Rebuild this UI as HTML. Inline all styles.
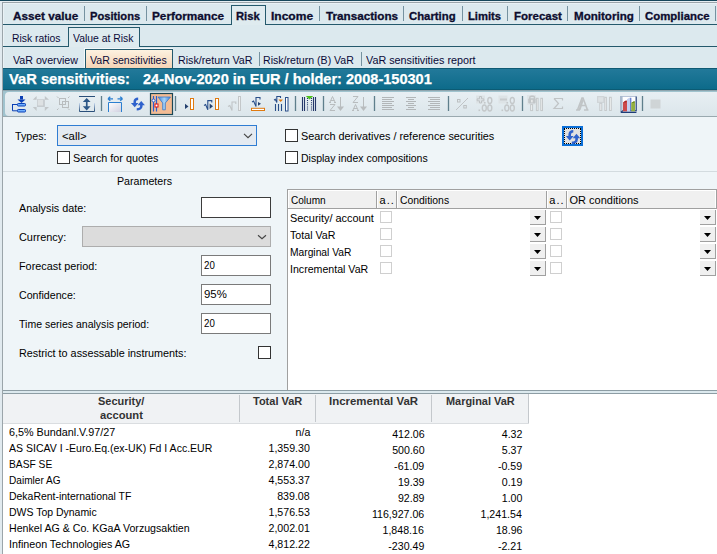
<!DOCTYPE html>
<html><head><meta charset="utf-8"><style>
html,body{margin:0;padding:0;width:717px;height:554px;overflow:hidden;position:relative;background:#dce9ee;font-family:'Liberation Sans', sans-serif;}
.a{position:absolute;}
</style></head><body>
<!-- frame -->
<div class="a" style="left:0;top:0;width:717px;height:1px;background:#17475b"></div>
<div class="a" style="left:0;top:1px;width:717px;height:1px;background:#e6eef2"></div>
<div class="a" style="left:0;top:2px;width:2px;height:552px;background:#e1eaef"></div>
<div class="a" style="left:2px;top:2px;width:715px;height:1px;background:#9ba5aa"></div>
<div class="a" style="left:2px;top:2px;width:1px;height:552px;background:#9ba5aa"></div>
<div class="a" style="left:3px;top:3px;width:714px;height:1px;background:#e9f1f5"></div>
<div class="a" style="left:3px;top:3px;width:1px;height:87px;background:#e9f1f5"></div>
<!-- main tab separators -->
<div class="a" style="left:84px;top:6px;width:1px;height:15px;background:#7592a0"></div>
<div class="a" style="left:146px;top:6px;width:1px;height:15px;background:#7592a0"></div>
<div class="a" style="left:319px;top:6px;width:1px;height:15px;background:#7592a0"></div>
<div class="a" style="left:403px;top:6px;width:1px;height:15px;background:#7592a0"></div>
<div class="a" style="left:462px;top:6px;width:1px;height:15px;background:#7592a0"></div>
<div class="a" style="left:507px;top:6px;width:1px;height:15px;background:#7592a0"></div>
<div class="a" style="left:567px;top:6px;width:1px;height:15px;background:#7592a0"></div>
<div class="a" style="left:639px;top:6px;width:1px;height:15px;background:#7592a0"></div>
<div class="a" style="left:715px;top:6px;width:1px;height:15px;background:#7592a0"></div>
<!-- risk tab -->
<div class="a" style="left:231px;top:5px;width:33px;height:19px;border:1px solid #24596c;border-bottom:none;background:#dfebef"></div>
<div class="a" style="left:3px;top:24px;width:228px;height:1px;background:#24596c"></div>
<div class="a" style="left:266px;top:24px;width:451px;height:1px;background:#24596c"></div>
<!-- second row -->
<div class="a" style="left:68px;top:27px;width:70px;height:19px;border:1px solid #24596c;border-bottom:none;background:#dfebef"></div>
<div class="a" style="left:3px;top:46px;width:65px;height:1px;background:#24596c"></div>
<div class="a" style="left:140px;top:46px;width:577px;height:1px;background:#24596c"></div>
<!-- third row -->
<div class="a" style="left:84px;top:48px;width:89px;height:20px;background:#f4f8fa"></div>
<div class="a" style="left:85px;top:49px;width:86px;height:19px;border:1px solid #24596c;border-bottom:none;background:linear-gradient(#fdf2e0,#f4d2b4)"></div>
<div class="a" style="left:259px;top:52px;width:1px;height:14px;background:#7592a0"></div>
<div class="a" style="left:361px;top:52px;width:1px;height:14px;background:#7592a0"></div>
<!-- title bar -->
<div class="a" style="left:3px;top:68px;width:714px;height:22px;background:linear-gradient(#0f5a73 0,#0f5a73 1px,#22799a 1px,#0d6b8a 21px,#0b5b74 21px)"></div>
<div class="a" style="left:3px;top:90px;width:714px;height:1px;background:#8fa5ae"></div>
<!-- toolbar -->
<div class="a" style="left:3px;top:91px;width:714px;height:25px;background:#a0c3ce"></div>
<div class="a" style="left:5px;top:92px;width:712px;height:24px;border-radius:4px 0 0 4px;background:linear-gradient(#e8eff3,#dce6eb)"></div>
<div class="a" style="left:3px;top:116px;width:714px;height:1px;background:#9aa9af"></div>
<svg class="a" style="left:0;top:0" width="717" height="120" viewBox="0 0 717 120">
<defs>
<linearGradient id="g5" x1="0" y1="0" x2="1" y2="1"><stop offset="0" stop-color="#fff"/><stop offset="1" stop-color="#cfd0e0"/></linearGradient>
<linearGradient id="g4" x1="0" y1="0" x2="0" y2="1"><stop offset="0" stop-color="#c9daf0"/><stop offset="1" stop-color="#2a4f7a"/></linearGradient>
<linearGradient id="gf" x1="0" y1="0" x2="1" y2="0"><stop offset="0" stop-color="#3c82d8"/><stop offset="0.5" stop-color="#a8d4f8"/><stop offset="1" stop-color="#3c82d8"/></linearGradient>
</defs>
<g stroke="#5f7f8c" stroke-width="1.3">
<path d="M101.5 96V111M175.5 96V111M295.5 96V111M323.5 96V111M374.5 96V111M448.5 96V111M522.5 96V111M642.5 96V111"/>
</g>
<!-- 1 tree -->
<g>
<rect x="20" y="96" width="3" height="3.5" fill="#0a3fb5"/>
<path d="M17.5 99.5H25.5L21.5 103Z" fill="#0a3fb5"/>
<path d="M12.5 104V110.8H17M12.5 104.5H17" stroke="#0a3fb5" fill="none"/>
<rect x="17.5" y="103.5" width="8" height="2.5" rx="0.8" fill="#6fb0ff" stroke="#0a3fb5"/>
<rect x="17.5" y="109.5" width="8" height="2.5" rx="0.8" fill="#6fb0ff" stroke="#0a3fb5"/>
</g>
<!-- 2 gray arrows -->
<g fill="#c1c6c9">
<path d="M32.8 99.8L36.6 95.9V99.8Z"/><path d="M49 99.8L44.8 95.9V99.8Z"/>
<path d="M32.8 107L36.6 110.9V107Z"/><path d="M49 107L44.8 110.9V107Z"/>
<rect x="37" y="99.3" width="7.8" height="7.6" fill="#c4c9cc"/>
<rect x="37.6" y="99.9" width="5.6" height="5.6" fill="#dde1e3"/>
</g>
<!-- 3 gray squares -->
<g stroke="#b9bdbf" fill="none">
<rect x="59.5" y="98.5" width="6" height="6"/><rect x="62.5" y="101.5" width="6" height="6"/>
<path d="M57 96.5L58.5 98M69.5 96.5L68 98M57 110L58.5 108.5M69.5 110L68 108.5" stroke-width="1"/>
</g>
<!-- 4 expand vertical -->
<g>
<path d="M79 96.5H95" stroke="#2a4f7a"/>
<path d="M79.5 103V111.5H94.5V103" stroke="url(#g4)" fill="none"/>
<path d="M86.7 98L82.8 102H90.6Z M86.7 110.5L82.8 106.3H90.6Z" fill="#2c5888"/>
<rect x="85.9" y="101.5" width="1.7" height="5.5" fill="#2c5888"/>
</g>
<!-- 5 -->
<g>
<path d="M108 98.8H113M108 98.8L110.3 96.8M108 98.8L110.3 100.8 M117.5 98.8H122.5M122.5 98.8L120.2 96.8M122.5 98.8L120.2 100.8" stroke="#2a7fd0" stroke-width="1.3" fill="none"/>
<rect x="108.5" y="102.5" width="13" height="9.5" fill="url(#g5)"/>
<path d="M108.5 112V102.5H121.5V112" stroke="#2a7fd0" fill="none"/>
</g>
<!-- 6 refresh arrows -->
<g transform="translate(130.2 96.8) scale(0.96 0.9)">
<path d="M8.3 2.2C5.8 2.2 4.7 3.6 4.7 5.6V7.5" stroke="#2f62cc" stroke-width="2.6" fill="none"/>
<path d="M0.8 7H8.6L4.7 11.6Z" fill="#2f62cc"/>
<path d="M6.8 13.9C9.4 13.9 11.6 12.7 11.6 10.5V8.6" stroke="#2f62cc" stroke-width="2.6" fill="none"/>
<path d="M7.7 9.3H15.3L11.5 4.8Z" fill="#2f62cc"/>
</g>
<!-- 7 filter selected -->
<g>
<rect x="150.5" y="93.5" width="22" height="21" fill="#f3bc94" stroke="#1b4756" stroke-width="1.2"/>
<path d="M153.5 96V111.5M156.5 96V111.5" stroke="#2a5fd0" stroke-width="1.2"/>
<circle cx="153.5" cy="100.5" r="1.5" fill="#fff" stroke="#2a5fd0"/>
<rect x="155" y="104" width="3" height="3" fill="#fff" stroke="#e01010"/>
<path d="M158 97H170.5L165.3 103V109.8H162.7V103Z" fill="url(#gf)" stroke="#3a78c8" stroke-width="0.8"/>
</g>
<!-- 8 -->
<path d="M185 103.8V109L188.5 106.4Z" fill="#24406e"/>
<rect x="190.5" y="98.5" width="3" height="11" fill="#fff" stroke="#e07a10"/>
<!-- 9 -->
<path d="M204 105.5L205.6 104.6L207.8 109.8V100.6H211.8V102.5" stroke="#2a4f8a" stroke-width="1.1" fill="none"/>
<path d="M209.6 103.5V109L213 106.3Z" fill="#24406e"/>
<rect x="215.5" y="98.5" width="3" height="11" fill="#fff" stroke="#e07a10"/>
<!-- 10 gray -->
<path d="M228 106.5L229.8 105.5L232 110.4V102H235.8V104" stroke="#c0c4c6" stroke-width="1.1" fill="none"/>
<rect x="238.5" y="96.5" width="2" height="14" fill="#eef0f1" stroke="#c3c7c9"/>
<!-- 11 -->
<path d="M252 102L253.6 101.1L256 106.5V97.5H260V99.5" stroke="#2a4f8a" stroke-width="1.1" fill="none"/>
<path d="M258 101.9V105.8L261 103.8Z" fill="#24406e"/>
<rect x="251.5" y="108.3" width="13" height="2.2" fill="#fff" stroke="#e07a10"/>
<!-- 12 -->
<path d="M274 100L275.3 99.3L276.8 102.5V96.5H280.5V98" stroke="#2a4f8a" stroke-width="1.1" fill="none"/>
<path d="M278.4 99.4H283L280.7 102Z" fill="#e07a10"/>
<path d="M275.5 104V111M278.5 104V111M281.5 104V111" stroke="#2a4f8a" stroke-width="1.1"/>
<rect x="285.5" y="97.5" width="2.5" height="13.5" fill="#fff" stroke="#2a4f8a"/>
<!-- 13 columns -->
<path d="M302.5 97V111M304.5 97V111M313.5 97V111M315.5 97V111" stroke="#26386a" stroke-width="1.1"/>
<path d="M307.5 98V111M311.5 98V111" stroke="#26386a" stroke-width="1.1" stroke-dasharray="1 1.1"/>
<path d="M305.8 96H313.2L309.5 99.6Z" fill="#4cc01a"/>
<!-- 14 AZ -->
<g stroke="#b8bcbe" fill="none" stroke-width="1">
<path d="M329.8 102.5L332.5 96.5L335.2 102.5M330.8 100.5H334.2M329 102.5H331M334 102.5H336"/>
<path d="M330 104.5H335L330 110.5H335"/>
<path d="M340.5 97V108"/>
</g>
<path d="M337 106.5H344L340.5 111Z" fill="#b8bcbe"/>
<!-- 15 ZA -->
<g stroke="#b8bcbe" fill="none" stroke-width="1">
<path d="M353 96.5H358L353 102.5H358"/>
<path d="M352.8 110.5L355.5 104.5L358.2 110.5M353.8 108.5H357.2M352 110.5H354M357 110.5H359"/>
<path d="M363.5 97V108"/>
</g>
<path d="M360 106.5H367L363.5 111Z" fill="#b8bcbe"/>
<!-- 16-18 align -->
<g stroke="#b2b6b8" stroke-width="1">
<path d="M382 97.5H394M382 99.5H392M382 101.5H394M382 103.5H392M382 105.5H394M382 107.5H392M382 109.5H394"/>
<path d="M406 97.5H416M408 99.5H414M406 101.5H416M408 103.5H414M406 105.5H416M408 107.5H414M406 109.5H416"/>
<path d="M428 97.5H440M430 99.5H440M428 101.5H440M430 103.5H440M428 105.5H440M430 107.5H440M428 109.5H440"/>
</g>
<!-- 19 % -->
<g stroke="#bcc0c2" fill="none">
<rect x="457.5" y="99.5" width="2.5" height="2.5"/><rect x="463.8" y="105.5" width="2.5" height="2.5"/>
<path d="M456 110L468 98" stroke-width="0.9"/>
</g>
<!-- 20 +.0 .00 -->
<g fill="#c4c8ca">
<rect x="476" y="95.5" width="9" height="8" fill="#dde3e6"/>
<path d="M479.5 96.5H481.5V98.8H483.8V100.8H481.5V103H479.5V100.8H477.2V98.8H479.5Z" fill="none" stroke="#bfc3c5"/>
<rect x="484" y="102" width="1.6" height="1.6"/>
<rect x="478.5" y="109.5" width="1.6" height="1.6"/>
<ellipse cx="489.8" cy="100.5" rx="2" ry="3" fill="none" stroke="#c4c8ca" stroke-width="1.4"/>
<ellipse cx="484.3" cy="108" rx="2" ry="3" fill="none" stroke="#c4c8ca" stroke-width="1.4"/>
<ellipse cx="489.8" cy="108" rx="2" ry="3" fill="none" stroke="#c4c8ca" stroke-width="1.4"/>
</g>
<!-- 21 -.0 .00 -->
<g fill="#c4c8ca">
<rect x="498.5" y="95.5" width="9" height="8" fill="#dde3e6"/>
<rect x="500" y="98.5" width="7" height="2" fill="#c8ccce"/>
<rect x="506.5" y="102" width="1.6" height="1.6"/>
<rect x="501.5" y="109.5" width="1.6" height="1.6"/>
<ellipse cx="512.3" cy="100.5" rx="2" ry="3" fill="none" stroke="#c4c8ca" stroke-width="1.4"/>
<ellipse cx="506.8" cy="108" rx="2" ry="3" fill="none" stroke="#c4c8ca" stroke-width="1.4"/>
<ellipse cx="512.3" cy="108" rx="2" ry="3" fill="none" stroke="#c4c8ca" stroke-width="1.4"/>
</g>
<!-- 22 lock bars -->
<g>
<rect x="527" y="95" width="9" height="10" fill="#dfe5e8"/>
<path d="M529.8 99V97.6Q529.8 96.3 531.2 96.3H533.1Q534.5 96.3 534.5 97.6V99" stroke="#c2c6c8" stroke-width="1.4" fill="none"/>
<path d="M529 98.3H534.8L535.6 99.2V102.8L534.8 103.6H529L528.2 102.8V99.2Z" fill="#c2c6c8"/>
<rect x="531.2" y="99.8" width="1.4" height="2.6" fill="#eef0f1"/>
<rect x="530.6" y="104.6" width="2" height="6" fill="#eef0f1" stroke="#c4c8ca"/>
<rect x="536.4" y="98.3" width="1.7" height="12.3" fill="#eef0f1" stroke="#c4c8ca"/>
<rect x="540.8" y="98.3" width="1.7" height="12.3" fill="#eef0f1" stroke="#c4c8ca"/>
</g>
<!-- 23 sigma -->
<path d="M554 98.5H562.5V100.5M554 98.5L558.5 103.5L554 108.5H562.5V106.5" stroke="#c0c4c6" stroke-width="1.2" fill="none"/>
<!-- 24 A -->
<path d="M576 110H580M584 110H588.5M577.5 110L582 98H583L587.5 110M579.2 105.5H585.8" stroke="#c0c4c6" stroke-width="1.6" fill="none"/>
<path d="M582 98L578.5 110H580.5L583.5 101Z" fill="#c0c4c6"/>
<!-- 25 gray bars -->
<g>
<rect x="597" y="96" width="7.4" height="7" fill="#d0d5d8"/>
<rect x="598.2" y="97.2" width="5" height="4.6" fill="#dde2e4"/>
<rect x="599.8" y="103.3" width="2" height="7.2" fill="#eef0f1" stroke="#c6cacc"/>
<rect x="604.8" y="97.3" width="1.6" height="13.2" fill="#eef0f1" stroke="#c6cacc"/>
<rect x="609.5" y="97.3" width="1.8" height="13.2" fill="#eef0f1" stroke="#c6cacc"/>
</g>
<!-- 26 chart selected -->
<g>
<rect x="620" y="96" width="17" height="17" fill="#fefeff"/>
<path d="M620.5 96.5H636.5" stroke="#b8c4d8"/>
<rect x="620" y="96" width="2.6" height="17" fill="#a9b9cd"/>
<path d="M621 112.3L622.8 110.8H636.2V96.5" stroke="#1f3d78" stroke-width="1.2" fill="none"/>
<path d="M621 112.5H636.5" stroke="#1f3d78" stroke-width="1"/>
<path d="M623 102.5L625.5 100.8H627V111.2H623Z" fill="#cc4a4a"/>
<path d="M623 102.5L625.5 100.8H627L626 102.5Z" fill="#a82a2a"/>
<path d="M627 99.3L629.3 97.8H630.8V111.2H627Z" fill="#c4d0f0"/>
<path d="M630.8 97.8V111.2" stroke="#3050c0" stroke-width="0.9"/>
<path d="M631.2 103L633.5 101.5H635V111.2H631.2Z" fill="#94b040"/>
<path d="M631.2 103L633.5 101.5H635L634 103Z" fill="#6a8a20"/>
</g>
<!-- 27 -->
<rect x="650.5" y="99.5" width="10" height="9" fill="#cfd4d6"/>
</svg>

<!-- search area -->
<div class="a" style="left:3px;top:117px;width:714px;height:437px;background:#eff5f8"></div>
<div class="a" style="left:3px;top:171px;width:714px;height:1px;background:#d3dbdf"></div>
<div class="a" style="left:57px;top:125px;width:198px;height:19px;border:1px solid #2f7dd3;background:#e4eaf1"></div>
<svg class="a" style="left:243px;top:132px" width="11" height="8"><path d="M1 1.8 L5 5.6 L9 1.8" stroke="#444" stroke-width="1.15" fill="none"/></svg>
<div class="a" style="left:57px;top:151px;width:11px;height:11px;border:1px solid #333;background:#fff"></div>
<div class="a" style="left:285px;top:129px;width:11px;height:11px;border:1px solid #333;background:#fff"></div>
<div class="a" style="left:285px;top:151px;width:11px;height:11px;border:1px solid #333;background:#fff"></div>
<!-- refresh button -->
<div class="a" style="left:562px;top:126px;width:17px;height:16px;border:2px solid #0b6fd8;background:#fff"></div>
<div class="a" style="left:564px;top:128px;width:15px;height:14px;border:1px dotted #000;background:#e1e1e1"></div>
<svg class="a" style="left:565px;top:129px" width="15" height="15" viewBox="0 0 15 15">
<path d="M8.3 2.2C5.8 2.2 4.7 3.6 4.7 5.6V7.5" stroke="#2f62cc" stroke-width="2.6" fill="none"/>
<path d="M0.8 7H8.6L4.7 11.6Z" fill="#2f62cc"/>
<path d="M6.8 13.9C9.4 13.9 11.6 12.7 11.6 10.5V8.6" stroke="#2f62cc" stroke-width="2.6" fill="none"/>
<path d="M7.7 9.3H15.3L11.5 4.8Z" fill="#2f62cc"/>
</svg>
<!-- parameters -->
<div class="a" style="left:201px;top:197px;width:68px;height:19px;border:1px solid #3c3c3c;background:#fff"></div>
<div class="a" style="left:82px;top:226px;width:187px;height:19px;border:1px solid #adadad;background:#dcdcdc"></div>
<svg class="a" style="left:257px;top:233px" width="11" height="8"><path d="M1 2.3 L5 5.7 L9 2.3" stroke="#444" stroke-width="1.15" fill="none"/></svg>
<div class="a" style="left:201px;top:255px;width:68px;height:19px;border:1px solid #7a7a7a;background:#fff"></div>
<div class="a" style="left:201px;top:284px;width:68px;height:19px;border:1px solid #7a7a7a;background:#fff"></div>
<div class="a" style="left:201px;top:313px;width:68px;height:19px;border:1px solid #7a7a7a;background:#fff"></div>
<div class="a" style="left:258px;top:346px;width:11px;height:11px;border:1px solid #333;background:#fff"></div>
<!-- column table -->
<div class="a" style="left:287px;top:189px;width:430px;height:201px;background:#fff"></div>
<div class="a" style="left:287px;top:189px;width:1px;height:201px;background:#a0a0a0"></div>
<div class="a" style="left:287px;top:189px;width:430px;height:1px;background:#a0a0a0"></div>
<div class="a" style="left:716px;top:189px;width:1px;height:20px;background:#a0a0a0"></div>
<div class="a" style="left:289px;top:191px;width:426px;height:17px;background:#f0f0f0"></div>
<div class="a" style="left:288px;top:208px;width:429px;height:1px;background:#a0a0a0"></div>
<div class="a" style="left:376px;top:191px;width:1px;height:17px;background:#a0a0a0"></div>
<div class="a" style="left:377px;top:191px;width:1px;height:17px;background:#fff"></div>
<div class="a" style="left:396px;top:191px;width:1px;height:17px;background:#a0a0a0"></div>
<div class="a" style="left:397px;top:191px;width:1px;height:17px;background:#fff"></div>
<div class="a" style="left:546px;top:191px;width:1px;height:17px;background:#a0a0a0"></div>
<div class="a" style="left:547px;top:191px;width:1px;height:17px;background:#fff"></div>
<div class="a" style="left:566px;top:191px;width:1px;height:17px;background:#a0a0a0"></div>
<div class="a" style="left:567px;top:191px;width:1px;height:17px;background:#fff"></div>
<div class="a" style="left:380px;top:211px;width:10px;height:10px;border:1px solid #cfcfcf;background:#fff"></div>
<div class="a" style="left:550px;top:211px;width:10px;height:10px;border:1px solid #cfcfcf;background:#fff"></div>
<div class="a" style="left:530px;top:210px;width:15px;height:14px;background:#f0f0f0;border-right:1px solid #a0a0a0;border-bottom:1px solid #a0a0a0"></div>
<svg class="a" style="left:534px;top:216px" width="8" height="5"><path d="M0 0 L7 0 L3.5 4 Z" fill="#000"/></svg>
<div class="a" style="left:700px;top:210px;width:15px;height:14px;background:#f0f0f0;border-right:1px solid #a0a0a0;border-bottom:1px solid #a0a0a0"></div>
<svg class="a" style="left:704px;top:216px" width="8" height="5"><path d="M0 0 L7 0 L3.5 4 Z" fill="#000"/></svg>
<div class="a" style="left:380px;top:228px;width:10px;height:10px;border:1px solid #cfcfcf;background:#fff"></div>
<div class="a" style="left:550px;top:228px;width:10px;height:10px;border:1px solid #cfcfcf;background:#fff"></div>
<div class="a" style="left:530px;top:227px;width:15px;height:14px;background:#f0f0f0;border-right:1px solid #a0a0a0;border-bottom:1px solid #a0a0a0"></div>
<svg class="a" style="left:534px;top:233px" width="8" height="5"><path d="M0 0 L7 0 L3.5 4 Z" fill="#000"/></svg>
<div class="a" style="left:700px;top:227px;width:15px;height:14px;background:#f0f0f0;border-right:1px solid #a0a0a0;border-bottom:1px solid #a0a0a0"></div>
<svg class="a" style="left:704px;top:233px" width="8" height="5"><path d="M0 0 L7 0 L3.5 4 Z" fill="#000"/></svg>
<div class="a" style="left:380px;top:245px;width:10px;height:10px;border:1px solid #cfcfcf;background:#fff"></div>
<div class="a" style="left:550px;top:245px;width:10px;height:10px;border:1px solid #cfcfcf;background:#fff"></div>
<div class="a" style="left:530px;top:244px;width:15px;height:14px;background:#f0f0f0;border-right:1px solid #a0a0a0;border-bottom:1px solid #a0a0a0"></div>
<svg class="a" style="left:534px;top:250px" width="8" height="5"><path d="M0 0 L7 0 L3.5 4 Z" fill="#000"/></svg>
<div class="a" style="left:700px;top:244px;width:15px;height:14px;background:#f0f0f0;border-right:1px solid #a0a0a0;border-bottom:1px solid #a0a0a0"></div>
<svg class="a" style="left:704px;top:250px" width="8" height="5"><path d="M0 0 L7 0 L3.5 4 Z" fill="#000"/></svg>
<div class="a" style="left:380px;top:262px;width:10px;height:10px;border:1px solid #cfcfcf;background:#fff"></div>
<div class="a" style="left:550px;top:262px;width:10px;height:10px;border:1px solid #cfcfcf;background:#fff"></div>
<div class="a" style="left:530px;top:261px;width:15px;height:14px;background:#f0f0f0;border-right:1px solid #a0a0a0;border-bottom:1px solid #a0a0a0"></div>
<svg class="a" style="left:534px;top:267px" width="8" height="5"><path d="M0 0 L7 0 L3.5 4 Z" fill="#000"/></svg>
<div class="a" style="left:700px;top:261px;width:15px;height:14px;background:#f0f0f0;border-right:1px solid #a0a0a0;border-bottom:1px solid #a0a0a0"></div>
<svg class="a" style="left:704px;top:267px" width="8" height="5"><path d="M0 0 L7 0 L3.5 4 Z" fill="#000"/></svg>
<!-- bottom split -->
<div class="a" style="left:3px;top:390px;width:714px;height:1px;background:#8d9da4"></div>
<div class="a" style="left:3px;top:391px;width:714px;height:2px;background:#dce9ee"></div>
<div class="a" style="left:3px;top:393px;width:714px;height:1px;background:#8d9da4"></div>
<div class="a" style="left:3px;top:394px;width:714px;height:160px;background:#fff"></div>
<div class="a" style="left:3px;top:394px;width:526px;height:29px;background:#f0f2f4"></div>
<div class="a" style="left:3px;top:423px;width:526px;height:1px;background:#dadde0"></div>
<div class="a" style="left:239px;top:395px;width:1px;height:27px;background:#c4c8cc"></div>
<div class="a" style="left:315px;top:395px;width:1px;height:27px;background:#c4c8cc"></div>
<div class="a" style="left:431px;top:395px;width:1px;height:27px;background:#c4c8cc"></div>
<div class="a" style="left:528px;top:394px;width:1px;height:29px;background:#c4c8cc"></div>
<div class="a" style="left:2px;top:2px;width:1px;height:552px;background:#9ba5aa"></div>

<div id="t0" style="position:absolute;top:11px;line-height:11px;white-space:pre;font-family:'Liberation Sans', sans-serif;font-size:11px;font-weight:bold;color:#0d0d2e;-webkit-text-stroke:0.3px #0d0d2e;left:13.4px;transform:scaleX(1.0661);transform-origin:left top;">Asset value</div>
<div id="t1" style="position:absolute;top:11px;line-height:11px;white-space:pre;font-family:'Liberation Sans', sans-serif;font-size:11px;font-weight:bold;color:#0d0d2e;-webkit-text-stroke:0.3px #0d0d2e;left:90.4px;transform:scaleX(1.0138);transform-origin:left top;">Positions</div>
<div id="t2" style="position:absolute;top:11px;line-height:11px;white-space:pre;font-family:'Liberation Sans', sans-serif;font-size:11px;font-weight:bold;color:#0d0d2e;-webkit-text-stroke:0.3px #0d0d2e;left:152.3px;transform:scaleX(1.0719);transform-origin:left top;">Performance</div>
<div id="t3" style="position:absolute;top:11px;line-height:11px;white-space:pre;font-family:'Liberation Sans', sans-serif;font-size:11px;font-weight:bold;color:#0d0d2e;-webkit-text-stroke:0.3px #0d0d2e;left:236.4px;transform:scaleX(1.0194);transform-origin:left top;">Risk</div>
<div id="t4" style="position:absolute;top:11px;line-height:11px;white-space:pre;font-family:'Liberation Sans', sans-serif;font-size:11px;font-weight:bold;color:#0d0d2e;-webkit-text-stroke:0.3px #0d0d2e;left:271.3px;transform:scaleX(1.0931);transform-origin:left top;">Income</div>
<div id="t5" style="position:absolute;top:11px;line-height:11px;white-space:pre;font-family:'Liberation Sans', sans-serif;font-size:11px;font-weight:bold;color:#0d0d2e;-webkit-text-stroke:0.3px #0d0d2e;left:325.7px;transform:scaleX(1.0625);transform-origin:left top;">Transactions</div>
<div id="t6" style="position:absolute;top:11px;line-height:11px;white-space:pre;font-family:'Liberation Sans', sans-serif;font-size:11px;font-weight:bold;color:#0d0d2e;-webkit-text-stroke:0.3px #0d0d2e;left:409.4px;transform:scaleX(1.0302);transform-origin:left top;">Charting</div>
<div id="t7" style="position:absolute;top:11px;line-height:11px;white-space:pre;font-family:'Liberation Sans', sans-serif;font-size:11px;font-weight:bold;color:#0d0d2e;-webkit-text-stroke:0.3px #0d0d2e;left:468.3px;transform:scaleX(1.0214);transform-origin:left top;">Limits</div>
<div id="t8" style="position:absolute;top:11px;line-height:11px;white-space:pre;font-family:'Liberation Sans', sans-serif;font-size:11px;font-weight:bold;color:#0d0d2e;-webkit-text-stroke:0.3px #0d0d2e;left:513.7px;transform:scaleX(1.0445);transform-origin:left top;">Forecast</div>
<div id="t9" style="position:absolute;top:11px;line-height:11px;white-space:pre;font-family:'Liberation Sans', sans-serif;font-size:11px;font-weight:bold;color:#0d0d2e;-webkit-text-stroke:0.3px #0d0d2e;left:573.5px;transform:scaleX(1.0523);transform-origin:left top;">Monitoring</div>
<div id="t10" style="position:absolute;top:11px;line-height:11px;white-space:pre;font-family:'Liberation Sans', sans-serif;font-size:11px;font-weight:bold;color:#0d0d2e;-webkit-text-stroke:0.3px #0d0d2e;left:645.2px;transform:scaleX(1.0375);transform-origin:left top;">Compliance</div>
<div id="t11" style="position:absolute;top:33px;line-height:11px;white-space:pre;font-family:'Liberation Sans', sans-serif;font-size:11px;color:#0a0a38;left:12.3px;transform:scaleX(0.9427);transform-origin:left top;">Risk ratios</div>
<div id="t12" style="position:absolute;top:33px;line-height:11px;white-space:pre;font-family:'Liberation Sans', sans-serif;font-size:11px;color:#0a0a38;left:73px;transform:scaleX(0.9453);transform-origin:left top;">Value at Risk</div>
<div id="t13" style="position:absolute;top:55px;line-height:11px;white-space:pre;font-family:'Liberation Sans', sans-serif;font-size:11px;color:#0a0a38;left:12.7px;transform:scaleX(0.9695);transform-origin:left top;">VaR overview</div>
<div id="t14" style="position:absolute;top:55px;line-height:11px;white-space:pre;font-family:'Liberation Sans', sans-serif;font-size:11px;color:#0a0a38;left:89.5px;transform:scaleX(0.9601);transform-origin:left top;">VaR sensitivities</div>
<div id="t15" style="position:absolute;top:55px;line-height:11px;white-space:pre;font-family:'Liberation Sans', sans-serif;font-size:11px;color:#0a0a38;left:177.5px;transform:scaleX(0.9697);transform-origin:left top;">Risk/return VaR</div>
<div id="t16" style="position:absolute;top:55px;line-height:11px;white-space:pre;font-family:'Liberation Sans', sans-serif;font-size:11px;color:#0a0a38;left:263.4px;transform:scaleX(0.9614);transform-origin:left top;">Risk/return (B) VaR</div>
<div id="t17" style="position:absolute;top:55px;line-height:11px;white-space:pre;font-family:'Liberation Sans', sans-serif;font-size:11px;color:#0a0a38;left:366.4px;transform:scaleX(0.9814);transform-origin:left top;">VaR sensitivities report</div>
<div id="t18" style="position:absolute;top:71px;line-height:15px;white-space:pre;font-family:'Liberation Sans', sans-serif;font-size:15px;font-weight:bold;color:#fff;-webkit-text-stroke:0.25px #fff;left:9.3px;transform:scaleX(0.9805);transform-origin:left top;">VaR sensitivities:</div>
<div id="t19" style="position:absolute;top:71px;line-height:15px;white-space:pre;font-family:'Liberation Sans', sans-serif;font-size:15px;font-weight:bold;color:#fff;-webkit-text-stroke:0.25px #fff;left:142.6px;transform:scaleX(0.9703);transform-origin:left top;">24-Nov-2020 in EUR / holder: 2008-150301</div>
<div id="t20" style="position:absolute;top:131px;line-height:11px;white-space:pre;font-family:'Liberation Sans', sans-serif;font-size:11px;color:#000;left:15px;transform:scaleX(0.9720);transform-origin:left top;">Types:</div>
<div id="t21" style="position:absolute;top:131px;line-height:11px;white-space:pre;font-family:'Liberation Sans', sans-serif;font-size:11px;color:#000;left:61.6px;transform:scaleX(1.0310);transform-origin:left top;">&lt;all&gt;</div>
<div id="t22" style="position:absolute;top:153px;line-height:11px;white-space:pre;font-family:'Liberation Sans', sans-serif;font-size:11px;color:#000;left:72.8px;transform:scaleX(0.9845);transform-origin:left top;">Search for quotes</div>
<div id="t23" style="position:absolute;top:131px;line-height:11px;white-space:pre;font-family:'Liberation Sans', sans-serif;font-size:11px;color:#000;left:300.6px;transform:scaleX(0.9880);transform-origin:left top;">Search derivatives / reference securities</div>
<div id="t24" style="position:absolute;top:153px;line-height:11px;white-space:pre;font-family:'Liberation Sans', sans-serif;font-size:11px;color:#000;left:300.6px;transform:scaleX(0.9550);transform-origin:left top;">Display index compositions</div>
<div id="t25" style="position:absolute;top:176px;line-height:11px;white-space:pre;font-family:'Liberation Sans', sans-serif;font-size:11px;color:#000;left:116.6px;transform:scaleX(0.9691);transform-origin:left top;">Parameters</div>
<div id="t26" style="position:absolute;top:203px;line-height:11px;white-space:pre;font-family:'Liberation Sans', sans-serif;font-size:11px;color:#000;left:18.6px;transform:scaleX(0.9812);transform-origin:left top;">Analysis date:</div>
<div id="t27" style="position:absolute;top:232px;line-height:11px;white-space:pre;font-family:'Liberation Sans', sans-serif;font-size:11px;color:#000;left:18.6px;transform:scaleX(0.9898);transform-origin:left top;">Currency:</div>
<div id="t28" style="position:absolute;top:261px;line-height:11px;white-space:pre;font-family:'Liberation Sans', sans-serif;font-size:11px;color:#000;left:18.6px;transform:scaleX(0.9851);transform-origin:left top;">Forecast period:</div>
<div id="t29" style="position:absolute;top:290px;line-height:11px;white-space:pre;font-family:'Liberation Sans', sans-serif;font-size:11px;color:#000;left:18.6px;transform:scaleX(0.9673);transform-origin:left top;">Confidence:</div>
<div id="t30" style="position:absolute;top:319px;line-height:11px;white-space:pre;font-family:'Liberation Sans', sans-serif;font-size:11px;color:#000;left:18.6px;transform:scaleX(0.9572);transform-origin:left top;">Time series analysis period:</div>
<div id="t31" style="position:absolute;top:348px;line-height:11px;white-space:pre;font-family:'Liberation Sans', sans-serif;font-size:11px;color:#000;left:18.6px;transform:scaleX(0.9820);transform-origin:left top;">Restrict to assessable instruments:</div>
<div id="t32" style="position:absolute;top:260px;line-height:11px;white-space:pre;font-family:'Liberation Sans', sans-serif;font-size:11px;color:#000;left:204px;transform:scaleX(0.8816);transform-origin:left top;">20</div>
<div id="t33" style="position:absolute;top:289px;line-height:11px;white-space:pre;font-family:'Liberation Sans', sans-serif;font-size:11px;color:#000;left:204px;transform:scaleX(1.0349);transform-origin:left top;">95%</div>
<div id="t34" style="position:absolute;top:318px;line-height:11px;white-space:pre;font-family:'Liberation Sans', sans-serif;font-size:11px;color:#000;left:204px;transform:scaleX(0.8816);transform-origin:left top;">20</div>
<div id="t35" style="position:absolute;top:195px;line-height:11px;white-space:pre;font-family:'Liberation Sans', sans-serif;font-size:11px;color:#000;left:290.7px;transform:scaleX(0.9154);transform-origin:left top;">Column</div>
<div id="t36" style="position:absolute;top:195px;line-height:11px;white-space:pre;font-family:'Liberation Sans', sans-serif;font-size:11px;color:#000;letter-spacing:1px;left:379.6px;">a..</div>
<div id="t37" style="position:absolute;top:195px;line-height:11px;white-space:pre;font-family:'Liberation Sans', sans-serif;font-size:11px;color:#000;left:399.6px;transform:scaleX(0.9445);transform-origin:left top;">Conditions</div>
<div id="t38" style="position:absolute;top:195px;line-height:11px;white-space:pre;font-family:'Liberation Sans', sans-serif;font-size:11px;color:#000;letter-spacing:1px;left:549.3px;">a..</div>
<div id="t39" style="position:absolute;top:195px;line-height:11px;white-space:pre;font-family:'Liberation Sans', sans-serif;font-size:11px;color:#000;left:569.5px;">OR conditions</div>
<div id="t40" style="position:absolute;top:213px;line-height:11px;white-space:pre;font-family:'Liberation Sans', sans-serif;font-size:11px;color:#000;left:289.8px;transform:scaleX(0.9932);transform-origin:left top;">Security/ account</div>
<div id="t41" style="position:absolute;top:230px;line-height:11px;white-space:pre;font-family:'Liberation Sans', sans-serif;font-size:11px;color:#000;left:289.8px;transform:scaleX(0.9685);transform-origin:left top;">Total VaR</div>
<div id="t42" style="position:absolute;top:247px;line-height:11px;white-space:pre;font-family:'Liberation Sans', sans-serif;font-size:11px;color:#000;left:289.8px;transform:scaleX(0.9327);transform-origin:left top;">Marginal VaR</div>
<div id="t43" style="position:absolute;top:264px;line-height:11px;white-space:pre;font-family:'Liberation Sans', sans-serif;font-size:11px;color:#000;left:289.8px;transform:scaleX(0.9641);transform-origin:left top;">Incremental VaR</div>
<div id="t44" style="position:absolute;top:396px;line-height:11px;white-space:pre;font-family:'Liberation Sans', sans-serif;font-size:11px;font-weight:bold;color:#333;left:98.2px;transform:scaleX(0.9964);transform-origin:left top;">Security/</div>
<div id="t45" style="position:absolute;top:410px;line-height:11px;white-space:pre;font-family:'Liberation Sans', sans-serif;font-size:11px;font-weight:bold;color:#333;left:99.9px;transform:scaleX(1.0169);transform-origin:left top;">account</div>
<div id="t46" style="position:absolute;top:396px;line-height:11px;white-space:pre;font-family:'Liberation Sans', sans-serif;font-size:11px;font-weight:bold;color:#333;left:253px;">Total VaR</div>
<div id="t47" style="position:absolute;top:396px;line-height:11px;white-space:pre;font-family:'Liberation Sans', sans-serif;font-size:11px;font-weight:bold;color:#333;left:328.6px;transform:scaleX(1.0398);transform-origin:left top;">Incremental VaR</div>
<div id="t48" style="position:absolute;top:396px;line-height:11px;white-space:pre;font-family:'Liberation Sans', sans-serif;font-size:11px;font-weight:bold;color:#333;left:445.6px;transform:scaleX(0.9931);transform-origin:left top;">Marginal VaR</div>
<div id="t49" style="position:absolute;top:427px;line-height:11px;white-space:pre;font-family:'Liberation Sans', sans-serif;font-size:11px;color:#000;left:9.2px;transform:scaleX(0.9800);transform-origin:left top;">6,5% Bundanl.V.97/27</div>
<div id="t50" style="position:absolute;top:427px;line-height:11px;white-space:pre;font-family:'Liberation Sans', sans-serif;font-size:11px;color:#000;right:407px;transform:scaleX(0.9650);transform-origin:right top;">n/a</div>
<div id="t51" style="position:absolute;top:429px;line-height:11px;white-space:pre;font-family:'Liberation Sans', sans-serif;font-size:11px;color:#000;right:292.7px;transform:scaleX(0.9650);transform-origin:right top;">412.06</div>
<div id="t52" style="position:absolute;top:429px;line-height:11px;white-space:pre;font-family:'Liberation Sans', sans-serif;font-size:11px;color:#000;right:194.79999999999995px;transform:scaleX(0.9650);transform-origin:right top;">4.32</div>
<div id="t53" style="position:absolute;top:443px;line-height:11px;white-space:pre;font-family:'Liberation Sans', sans-serif;font-size:11px;color:#000;left:9.2px;transform:scaleX(0.9566);transform-origin:left top;">AS SICAV I -Euro.Eq.(ex-UK) Fd I Acc.EUR</div>
<div id="t54" style="position:absolute;top:443px;line-height:11px;white-space:pre;font-family:'Liberation Sans', sans-serif;font-size:11px;color:#000;right:407px;transform:scaleX(0.9650);transform-origin:right top;">1,359.30</div>
<div id="t55" style="position:absolute;top:445px;line-height:11px;white-space:pre;font-family:'Liberation Sans', sans-serif;font-size:11px;color:#000;right:292.7px;transform:scaleX(0.9650);transform-origin:right top;">500.60</div>
<div id="t56" style="position:absolute;top:445px;line-height:11px;white-space:pre;font-family:'Liberation Sans', sans-serif;font-size:11px;color:#000;right:194.79999999999995px;transform:scaleX(0.9650);transform-origin:right top;">5.37</div>
<div id="t57" style="position:absolute;top:459px;line-height:11px;white-space:pre;font-family:'Liberation Sans', sans-serif;font-size:11px;color:#000;left:9.2px;transform:scaleX(0.9318);transform-origin:left top;">BASF SE</div>
<div id="t58" style="position:absolute;top:459px;line-height:11px;white-space:pre;font-family:'Liberation Sans', sans-serif;font-size:11px;color:#000;right:407px;transform:scaleX(0.9650);transform-origin:right top;">2,874.00</div>
<div id="t59" style="position:absolute;top:461px;line-height:11px;white-space:pre;font-family:'Liberation Sans', sans-serif;font-size:11px;color:#000;right:292.7px;transform:scaleX(0.9650);transform-origin:right top;">-61.09</div>
<div id="t60" style="position:absolute;top:461px;line-height:11px;white-space:pre;font-family:'Liberation Sans', sans-serif;font-size:11px;color:#000;right:194.79999999999995px;transform:scaleX(0.9650);transform-origin:right top;">-0.59</div>
<div id="t61" style="position:absolute;top:475px;line-height:11px;white-space:pre;font-family:'Liberation Sans', sans-serif;font-size:11px;color:#000;left:9.2px;transform:scaleX(0.9173);transform-origin:left top;">Daimler AG</div>
<div id="t62" style="position:absolute;top:475px;line-height:11px;white-space:pre;font-family:'Liberation Sans', sans-serif;font-size:11px;color:#000;right:407px;transform:scaleX(0.9650);transform-origin:right top;">4,553.37</div>
<div id="t63" style="position:absolute;top:477px;line-height:11px;white-space:pre;font-family:'Liberation Sans', sans-serif;font-size:11px;color:#000;right:292.7px;transform:scaleX(0.9650);transform-origin:right top;">19.39</div>
<div id="t64" style="position:absolute;top:477px;line-height:11px;white-space:pre;font-family:'Liberation Sans', sans-serif;font-size:11px;color:#000;right:194.79999999999995px;transform:scaleX(0.9650);transform-origin:right top;">0.19</div>
<div id="t65" style="position:absolute;top:491px;line-height:11px;white-space:pre;font-family:'Liberation Sans', sans-serif;font-size:11px;color:#000;left:9.2px;transform:scaleX(0.9502);transform-origin:left top;">DekaRent-international TF</div>
<div id="t66" style="position:absolute;top:491px;line-height:11px;white-space:pre;font-family:'Liberation Sans', sans-serif;font-size:11px;color:#000;right:407px;transform:scaleX(0.9650);transform-origin:right top;">839.08</div>
<div id="t67" style="position:absolute;top:493px;line-height:11px;white-space:pre;font-family:'Liberation Sans', sans-serif;font-size:11px;color:#000;right:292.7px;transform:scaleX(0.9650);transform-origin:right top;">92.89</div>
<div id="t68" style="position:absolute;top:493px;line-height:11px;white-space:pre;font-family:'Liberation Sans', sans-serif;font-size:11px;color:#000;right:194.79999999999995px;transform:scaleX(0.9650);transform-origin:right top;">1.00</div>
<div id="t69" style="position:absolute;top:507px;line-height:11px;white-space:pre;font-family:'Liberation Sans', sans-serif;font-size:11px;color:#000;left:9.2px;transform:scaleX(0.9521);transform-origin:left top;">DWS Top Dynamic</div>
<div id="t70" style="position:absolute;top:507px;line-height:11px;white-space:pre;font-family:'Liberation Sans', sans-serif;font-size:11px;color:#000;right:407px;transform:scaleX(0.9650);transform-origin:right top;">1,576.53</div>
<div id="t71" style="position:absolute;top:509px;line-height:11px;white-space:pre;font-family:'Liberation Sans', sans-serif;font-size:11px;color:#000;right:292.7px;transform:scaleX(0.9650);transform-origin:right top;">116,927.06</div>
<div id="t72" style="position:absolute;top:509px;line-height:11px;white-space:pre;font-family:'Liberation Sans', sans-serif;font-size:11px;color:#000;right:194.79999999999995px;transform:scaleX(0.9650);transform-origin:right top;">1,241.54</div>
<div id="t73" style="position:absolute;top:523px;line-height:11px;white-space:pre;font-family:'Liberation Sans', sans-serif;font-size:11px;color:#000;left:9.2px;transform:scaleX(0.9657);transform-origin:left top;">Henkel AG &amp; Co. KGaA Vorzugsaktien</div>
<div id="t74" style="position:absolute;top:523px;line-height:11px;white-space:pre;font-family:'Liberation Sans', sans-serif;font-size:11px;color:#000;right:407px;transform:scaleX(0.9650);transform-origin:right top;">2,002.01</div>
<div id="t75" style="position:absolute;top:525px;line-height:11px;white-space:pre;font-family:'Liberation Sans', sans-serif;font-size:11px;color:#000;right:292.7px;transform:scaleX(0.9650);transform-origin:right top;">1,848.16</div>
<div id="t76" style="position:absolute;top:525px;line-height:11px;white-space:pre;font-family:'Liberation Sans', sans-serif;font-size:11px;color:#000;right:194.79999999999995px;transform:scaleX(0.9650);transform-origin:right top;">18.96</div>
<div id="t77" style="position:absolute;top:539px;line-height:11px;white-space:pre;font-family:'Liberation Sans', sans-serif;font-size:11px;color:#000;left:9.2px;transform:scaleX(0.9730);transform-origin:left top;">Infineon Technologies AG</div>
<div id="t78" style="position:absolute;top:539px;line-height:11px;white-space:pre;font-family:'Liberation Sans', sans-serif;font-size:11px;color:#000;right:407px;transform:scaleX(0.9650);transform-origin:right top;">4,812.22</div>
<div id="t79" style="position:absolute;top:541px;line-height:11px;white-space:pre;font-family:'Liberation Sans', sans-serif;font-size:11px;color:#000;right:292.7px;transform:scaleX(0.9650);transform-origin:right top;">-230.49</div>
<div id="t80" style="position:absolute;top:541px;line-height:11px;white-space:pre;font-family:'Liberation Sans', sans-serif;font-size:11px;color:#000;right:194.79999999999995px;transform:scaleX(0.9650);transform-origin:right top;">-2.21</div>
</body></html>
